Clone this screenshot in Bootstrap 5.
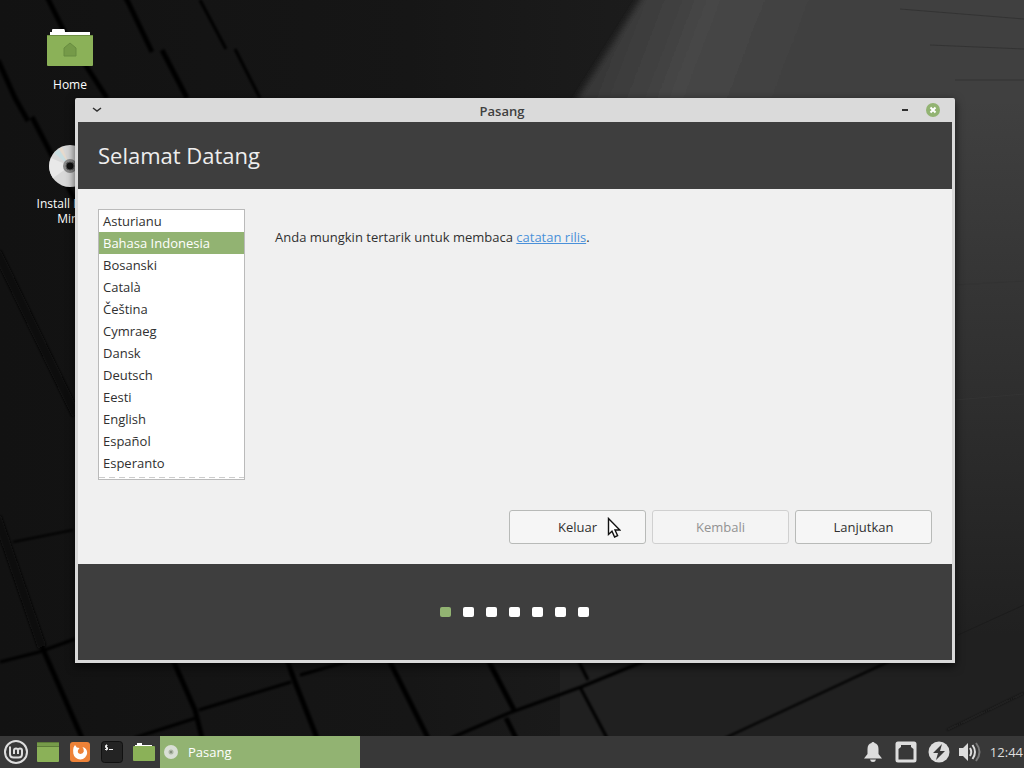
<!DOCTYPE html>
<html lang="id">
<head>
<meta charset="utf-8">
<meta name="viewport" content="width=device-width, initial-scale=1">
<title>Pasang</title>
<link href="https://cdn.jsdelivr.net/npm/bootstrap@5.3.0/dist/css/bootstrap.min.css" rel="stylesheet">
<style>
body{font-family:"Open Sans","Noto Sans",sans-serif;font-size:13px;line-height:22px;color:#303030;background:#141414}
.desktop{isolation:isolate}
.wallpaper{inset:0;z-index:-1}
.shortcut{width:80px;left:30px;color:#fff;font-size:12px;line-height:15px;text-decoration:none;text-align:center}
.shortcut-home{top:24px}
.shortcut-disc{top:142px}
.shortcut svg{display:block;margin:0 auto 9px}
.install-window{margin:98px 69px 0 75px;background:#dadada;border:solid #dadada;border-width:0 3px 3px;box-shadow:0 3px 10px #000a;border-radius:2px 2px 0 0}
.titlebar{height:24px;padding:0 12px}
.titlebar strong{font-size:13px;font-weight:600;color:#404040;padding-top:2px}
.titlebar button{border:0;background:none;padding:0;display:flex}
.dark-band{background:#3e3e3e}
.page-title{font-size:22px;line-height:30px;font-weight:400;color:#eee;margin:0;padding:18px 20px 19px}
.page-body{background:#f0f0f0;padding:20px}
.language-box{width:147px}
.language-box::after{content:"";position:absolute;left:1px;right:1px;bottom:2px;height:1px;background:repeating-linear-gradient(90deg,#ccc 0 6px,#fff 6px 10px)}
.language-list{display:block;width:100%;height:271px;border:1px solid #bababa;border-radius:0;background:#fff;padding:0;overflow:hidden;outline:0;color:#303030}
.language-list option{height:22px;min-height:22px;padding:2px 4px 0}
.language-list option:checked{background:linear-gradient(#92b372,#92b372);-webkit-text-fill-color:#fff}
.release-note{margin:17px 0 0 30px}
.release-note a{color:#4a90d9}
.buttons{gap:6px;padding-top:30px}
.wizard-btn{width:137px;height:34px;font-size:13px;padding:1px 0 0;border:1px solid #b8bab8;border-radius:3px;background:#f6f6f6;color:#303030}
.wizard-btn:disabled{background:#f4f4f4;border-color:#d0d0d0;color:#929292;opacity:1}
.step-row{padding:43px 2px 43px 0;gap:12px}
.step{width:11px;height:10px;border-radius:2px;background:#fff}
.step.current{background:#92b372}
.pointer{left:98px;top:7px;z-index:2;pointer-events:none}
.panel{height:32px;background:#383838;color:#ddd}
.panel button{border:0;background:none;padding:0;width:32px;height:32px;display:flex;align-items:center;justify-content:center}
.panel .task{width:200px;background:#92b372;color:#fff;justify-content:flex-start;padding-left:3px;gap:9px}
.tray button{width:33px}
.tray button:last-of-type{width:28px}
.clock{padding-left:6px;padding-right:1px}
</style>
</head>
<body>
<main class="desktop position-relative d-flex flex-column min-vh-100 overflow-hidden">
<svg class="wallpaper position-absolute w-100 h-100" viewBox="0 0 1024 768" preserveAspectRatio="none" aria-hidden="true">
<defs>
<linearGradient id="base" x1="0" y1="0" x2="1" y2="0"><stop offset="0" stop-color="#121212"/><stop offset=".4" stop-color="#161616"/><stop offset=".55" stop-color="#1a1a1a"/><stop offset="1" stop-color="#242424"/></linearGradient>
<linearGradient id="slab" x1="590" y1="30" x2="800" y2="110" gradientUnits="userSpaceOnUse"><stop offset="0" stop-color="#343434"/><stop offset=".45" stop-color="#464646"/><stop offset="1" stop-color="#404040"/></linearGradient>
<linearGradient id="fade" x1="0" y1="0" x2="0" y2="1"><stop offset="0" stop-color="#202020" stop-opacity="0"/><stop offset=".8" stop-color="#202020"/></linearGradient>
<filter id="soft"><feGaussianBlur stdDeviation="1.200"/></filter>
<filter id="softer"><feGaussianBlur stdDeviation="3"/></filter>
</defs>
<path fill="url(#base)" d="M0 0h1024v768H0z"/>
<path fill="url(#slab)" filter="url(#softer)" d="M646-10 570 110V640H1040V-10z"/>
<path fill="url(#fade)" d="M560 100h464v668H560z"/>
<g fill="none" stroke="#060606" stroke-width="5" filter="url(#soft)">
<path d="M46-5 66 35 107 98M124-5 128 2 152 52M162 50 187 98M-2 60 15 98 28 121M32 117 75 200M42 647 82 738M173 660 195 710 202 738M287 660 295 682 317 738M389 660 428 738M488 660 514 710M506 718 516 738"/>
<path stroke-width="3" d="M200 0 226 49M235 49 260 98M451 738 509 713 581 687 647 660M578 660 588 680M580 687 607 738M134 738 196 718M199 710 291 682M300 675 353 660M0 662 39 652 75 639"/>
<path stroke-width="2" d="M725 738 892 660M13 542 73 530"/>
<path stroke="#1b1b1b" stroke-width="1" d="M947 730 1024 693"/>
<path stroke="#080808" stroke-width="9" d="M-3 252 76 415M-3 517 42 647"/>
</g>
<path fill="none" stroke="#333" d="M900 9 1024 19M930 45 1024 49M955 80H1024M955 285 1024 281M955 400 1024 394"/>
<path fill="none" stroke="#1c1c1c" d="M958 635 1024 605"/>
</svg>

<a href="#home" class="shortcut shortcut-home position-absolute"><svg width="48" height="44" viewBox="0 0 48 44"><path fill="#fff" d="M4 13V8h2V6q0-1 1-1h11q1 0 1 3h25v5z"/><rect x="1" y="11" width="46" height="31" rx="1" fill="#8bb158"/><path d="M1 11.500H47" stroke="#6d8e42"/><path fill="#759a48" stroke="#688c40" d="m24 19 6 5v8H18v-8z"/></svg>Home</a>
<a href="#install" class="shortcut shortcut-disc position-absolute"><svg width="44" height="45" viewBox="0 0 44 45"><circle cx="22" cy="24" r="21" fill="#d8d8d8"/><path fill="#e8e8e8" d="M22 24 5 36A21 21 0 0 1 3 16z"/><path fill="#c9dde0" d="M22 24 6 11l5-4z"/><path fill="#e6dacd" d="M22 24 11 7l3-2z"/><circle cx="22" cy="24" r="7" fill="#8a8a8a"/><circle cx="22" cy="24" r="4" fill="#111" stroke="#555"/></svg>Install Linux Mint</a>

<section class="install-window position-relative" aria-label="Pasang">
<header class="titlebar d-flex align-items-center">
<button aria-label="Menu"><svg width="14" height="14" viewBox="0 0 14 14"><path d="m3 5 4 3 4-3" fill="none" stroke="#303030" stroke-width="1.500"/></svg></button>
<strong class="flex-grow-1 text-center">Pasang</strong>
<span class="d-flex gap-3 align-items-center"><button aria-label="Minimalkan"><svg width="10" height="14" viewBox="0 0 10 14"><path d="M2 6h6v2H2z" fill="#303030"/></svg></button>
<button aria-label="Tutup"><svg width="14" height="14" viewBox="0 0 14 14"><circle cx="7" cy="7" r="7" fill="#92b372"/><path d="m4.500 4.500 5 5m0-5-5 5" stroke="#fff" stroke-width="2"/></svg></button></span>
</header>
<div class="dark-band"><h1 class="page-title">Selamat Datang</h1></div>
<div class="page-body">
<div class="d-flex align-items-start">
<div class="language-box position-relative flex-shrink-0">
<select class="language-list" size="12" aria-label="Bahasa"><option>Asturianu</option><option selected>Bahasa Indonesia</option><option>Bosanski</option><option>Català</option><option>Čeština</option><option>Cymraeg</option><option>Dansk</option><option>Deutsch</option><option>Eesti</option><option>English</option><option>Español</option><option>Esperanto</option></select>
</div>
<p class="release-note">Anda mungkin tertarik untuk membaca <a href="#rilis">catatan rilis</a>.</p>
</div>
<div class="buttons d-flex justify-content-end">
<div class="position-relative"><button class="btn wizard-btn">Keluar</button>
<svg class="pointer position-absolute" width="14" height="22" viewBox="0 0 14 22" aria-hidden="true"><path d="M1.500 1.500v16l3.500-3.300 2.600 5.800 3-1.300L8 13h4.800z" fill="#fff" stroke="#111" stroke-width="1.400"/></svg></div>
<button class="btn wizard-btn" disabled>Kembali</button>
<button class="btn wizard-btn">Lanjutkan</button>
</div>
</div>
<div class="dark-band step-row d-flex justify-content-center"><span class="step current"></span><span class="step"></span><span class="step"></span><span class="step"></span><span class="step"></span><span class="step"></span><span class="step"></span></div>
</section>

<footer class="panel d-flex align-items-center mt-auto">
<button aria-label="Menu Mint"><svg width="26" height="26" viewBox="0 0 26 26" fill="none" stroke="#ddd"><circle cx="13" cy="13" r="11" stroke-width="2"/><path stroke-width="2" d="M7 7.500V15q0 3.500 3.500 3.500h5q3.500 0 3.500-3.500v-3.500q0-2-2-2t-2 2V15m0-3.500q0-2-2-2t-2 2V15"/></svg></button>
<button aria-label="Tampilkan desktop"><svg width="24" height="20" viewBox="0 0 24 20"><rect x="1" width="22" height="20" rx="1" fill="#8bb158"/><path fill="#5d7c38" d="M1 0h22v5H1z"/><path fill="#769b4a" d="M1 1h22v3H1z"/></svg></button>
<button aria-label="Firefox"><svg width="20" height="20" viewBox="0 0 20 20"><rect width="20" height="20" rx="3" fill="#ee8238"/><path fill="#fff" d="M3.500 5.500 5 3l1.800 2.500L9.500 6 8 8.200q-.8 2.800 1.600 3.600 3.200.6 4.200-2.300.3-2.500-1.300-4.500 4.500 1.200 4.700 6a7 7 0 0 1-13.900.5Q2.800 8 3.500 5.500z"/></svg></button>
<button aria-label="Terminal"><svg width="22" height="22" viewBox="0 0 22 22"><rect x=".5" y=".5" width="21" height="21" rx="3" fill="#232323" stroke="#111"/><path fill="none" stroke="#eee" d="M6.500 4.500H4.500v2h2v2H4M5.500 3.500v6M8 8.500h4"/></svg></button>
<button aria-label="Berkas"><svg width="22" height="20" viewBox="0 0 22 20"><path fill="#fff" d="M2 5V3h2V1h5v2h10v2z"/><rect y="4" width="22" height="15" rx="1" fill="#8bb158"/></svg></button>
<button class="task"><svg width="16" height="16" viewBox="0 0 16 16"><circle cx="8" cy="8" r="7" fill="#d9dfd5"/><circle cx="8" cy="8" r="2.500" fill="#abb5a3"/><circle cx="8" cy="8" r="1" fill="#788370"/></svg>Pasang</button>
<div class="tray d-flex align-items-center ms-auto">
<button aria-label="Notifikasi"><svg width="20" height="22" viewBox="0 0 20 22" fill="#ddd"><path d="M8.500 2q0-1 1.500-1t1.500 1q4 1 4 6v5l3.500 4.500H1L4.500 13V8q0-5 4-6zM7 18.500h6q-.5 2.500-3 2.500t-3-2.500z"/></svg></button>
<button aria-label="Jaringan"><svg width="22" height="22" viewBox="0 0 22 22"><path fill="#ddd" fill-rule="evenodd" d="M3 .5h16q2.500 0 2.500 2.500v16q0 2.500-2.500 2.500H3Q.5 21.500.5 19V3Q.5.500 3 .5zM3.500 18.500h15V8L16 6V4H6v2L3.500 8z"/></svg></button>
<button aria-label="Daya"><svg width="22" height="22" viewBox="0 0 22 22"><circle cx="11" cy="11" r="10.500" fill="#ddd"/><path fill="#383838" d="m14 3-9 9h5l-2 7 9-9h-5z"/></svg></button>
<button aria-label="Volume"><svg width="22" height="22" viewBox="0 0 22 22" fill="none" stroke-width="2"><path fill="#ddd" d="M0 7h4l5-5v18l-5-5H0z"/><path stroke="#ddd" d="M11 7q2.500 4 0 8M13.500 4q5 7 0 14"/><path stroke="#777" d="M17 2q7 9 0 18"/></svg></button>
<time class="clock">12:44</time>
</div>
</footer>
</main>
</body>
</html>
